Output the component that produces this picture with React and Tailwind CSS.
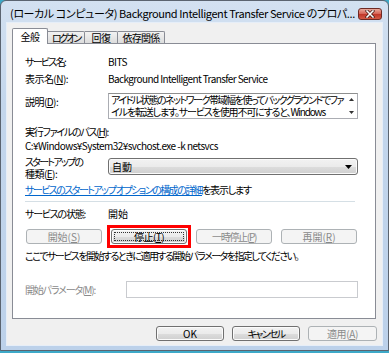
import React from "react";

const U = ({ children }) => (
  <span className="underline underline-offset-[1px] decoration-[1px]">{children}</span>
);

function Btn({ children, disabled, className = "" }) {
  const base =
    "h-[15px] flex items-center justify-center rounded-[3px] border leading-none whitespace-nowrap";
  const look = disabled
    ? "border-[#adb2b5] bg-[#f4f4f4] text-[#8a8a8a]"
    : "border-[#707070] bg-[linear-gradient(#f2f2f2_0%,#ebebeb_50%,#dddddd_51%,#cfcfcf_100%)] shadow-[inset_0_0_0_1px_#fbfbfb] text-black";
  return <div className={`${base} ${look} ${className}`}>{children}</div>;
}

function Row({ label, labelClass = "", children, className = "" }) {
  return (
    <div className={`flex items-center h-[13px] ${className}`}>
      <div className={`w-[83px] shrink-0 whitespace-nowrap ${labelClass}`}>{label}</div>
      <div className="flex-1 whitespace-nowrap">{children}</div>
    </div>
  );
}

const tabOff =
  "h-[12px] border border-b-0 border-l-0 border-[#898c95] bg-[linear-gradient(#f2f2f2,#dcdcdc)] flex items-center justify-center rounded-tr-[2px] whitespace-nowrap";

export default function App() {
  return (
    <div className="w-[389px] h-[353px] bg-[#3da9c8] text-[10px] leading-[13px] text-black font-['Noto_Sans_CJK_JP',sans-serif] [font-feature-settings:'palt'] overflow-hidden">
      <div className="h-[351px] flex flex-col rounded-t-[6px] border border-[#5b6470] bg-[linear-gradient(180deg,#d3e1f1_0%,#c3d6ec_30%,#bcd1ea_100%)]">
        {/* Title bar */}
        <div className="h-[22px] shrink-0 flex items-start pl-[9px] pr-[6px]">
          <div className="mt-[5px] text-[11px] leading-[14px] whitespace-nowrap tracking-[-0.4px]">
            (ローカル コンピュータ) Background Intelligent Transfer Service のプロパ...
          </div>
          <div className="ml-auto shrink-0 mt-[7px] w-[24px] h-[12px] rounded-[3px] border border-[#6e2a24] bg-[linear-gradient(#e9a99c_0%,#d7685a_45%,#c0382a_55%,#d45a45_100%)] flex items-center justify-center">
            <svg width="10" height="8" viewBox="0 0 10 8">
              <path d="M2 1 L8 7 M8 1 L2 7" stroke="#3b1510" strokeWidth="3" strokeLinecap="square" />
              <path d="M2 1 L8 7 M8 1 L2 7" stroke="#ffffff" strokeWidth="1.6" strokeLinecap="square" />
            </svg>
          </div>
        </div>

        {/* Client area */}
        <div className="flex-1 mx-[6px] mb-[5px] bg-[#f0f0f0] shadow-[0_0_0_1px_#e6eef8] flex flex-col">
          {/* Tabs */}
          <div className="flex items-end h-[20px] pl-[5px] pt-[5px]">
            <div className="relative z-10 h-[16px] -mb-px w-[36px] border border-b-0 border-[#898c95] bg-white flex items-center justify-center rounded-t-[2px] whitespace-nowrap tracking-[-0.5px]">
              全般
            </div>
            <div className={`${tabOff} w-[37px] tracking-[-2.2px]`}>ログオン</div>
            <div className={`${tabOff} w-[33px] tracking-[-0.5px]`}>回復</div>
            <div className={`${tabOff} w-[47px] tracking-[-0.75px]`}>依存関係</div>
          </div>

          {/* Panel */}
          <div className="ml-[5px] w-[364px] h-[276px] border border-[#898c95] bg-white pl-[12px] flex flex-col">
            <Row label="サービス名:" labelClass="tracking-[-1.7px]" className="mt-[11px]">
              <span className="tracking-[-0.5px]">BITS</span>
            </Row>
            <Row
              label={
                <>
                  表示名(<U>N</U>):
                </>
              }
              labelClass="tracking-[-0.55px]"
              className="mt-[4px]"
            >
              <span className="tracking-[-0.6px]">Background Intelligent Transfer Service</span>
            </Row>

            <div className="flex mt-[8px] h-[26px]">
              <div className="w-[83px] shrink-0 mt-[2px] tracking-[-0.55px]">
                説明(<U>D</U>):
              </div>
              <div className="w-[250px] h-[26px] border border-[#abadb3] border-t-[#8e8f8f] flex">
                <div className="flex-1 pl-[2px] leading-[12px] whitespace-nowrap">
                  <div className="tracking-[-1.5px]">
                    アイドル状態のネットワーク帯域幅を使ってバックグラウンドでファ
                  </div>
                  <div className="tracking-[-1.15px]">
                    イルを転送します。サービスを使用不可にすると、Windows
                  </div>
                </div>
                <div className="w-[11px] shrink-0 flex flex-col items-center justify-between py-[4px]">
                  <svg width="5" height="3" viewBox="0 0 5 3">
                    <path d="M0 3 L2.5 0 L5 3 Z" fill="#333" />
                  </svg>
                  <svg width="5" height="3" viewBox="0 0 5 3">
                    <path d="M0 0 L2.5 3 L5 0 Z" fill="#333" />
                  </svg>
                </div>
              </div>
            </div>

            <div className="mt-[6px] h-[13px] flex items-center whitespace-nowrap tracking-[-1.27px]">
              実行ファイルのパス(<U>H</U>):
            </div>
            <div className="mt-[1px] h-[13px] flex items-center whitespace-nowrap tracking-[-0.54px]">
              C:¥Windows¥System32¥svchost.exe -k netsvcs
            </div>

            <div className="flex mt-[4px] h-[24px]">
              <div className="w-[83px] shrink-0 leading-[12px] whitespace-nowrap">
                <div className="tracking-[-1.75px]">スタートアップの</div>
                <div className="tracking-[-0.55px]">
                  種類(<U>E</U>):
                </div>
              </div>
              <div className="mt-[2px] w-[250px] h-[17px] rounded-[3px] border border-[#707070] bg-[linear-gradient(#f2f2f2_0%,#ebebeb_50%,#dddddd_51%,#cfcfcf_100%)] shadow-[inset_0_0_0_1px_#fbfbfb] flex items-center pl-[3px] pr-[5px]">
                <span>自動</span>
                <svg className="ml-auto" width="7" height="4" viewBox="0 0 7 4">
                  <path d="M0 0 L7 0 L3.5 4 Z" fill="#000" />
                </svg>
              </div>
            </div>

            <div className="mt-[3px] h-[13px] flex items-center whitespace-nowrap">
              <span className="text-[#0066cc] underline underline-offset-[1px] tracking-[-1.55px]">
                サービスのスタートアップ オプションの構成の詳細
              </span>
              <span className="tracking-[-1.16px]">を表示します</span>
            </div>

            <div className="mt-[5px] w-[330px] h-px bg-[#d5dfe5]" />

            <Row label="サービスの状態:" labelClass="tracking-[-1.23px]" className="mt-[5px]">
              開始
            </Row>

            <div className="mt-[9px] ml-px flex gap-[9px]">
              <Btn disabled className="w-[76px]">
                開始(<U>S</U>)
              </Btn>
              <div className="relative">
                <div className="absolute -inset-[4px] border-[3px] border-[#ff0000]" />
                <Btn className="w-[76px] relative tracking-[-0.55px]">
                  <div className="absolute inset-[2px] border border-dotted border-[#333]" />
                  <span className="relative">
                    停止(<U>T</U>)
                  </span>
                </Btn>
              </div>
              <Btn disabled className="w-[76px] tracking-[-1.3px]">
                一時停止(<U>P</U>)
              </Btn>
              <Btn disabled className="w-[76px]">
                再開(<U>R</U>)
              </Btn>
            </div>

            <div className="mt-[5px] h-[13px] flex items-center whitespace-nowrap tracking-[-1.53px]">
              ここでサービスを開始するときに適用する開始パラメータを指定してください。
            </div>

            <div className="mt-[19px] flex items-center h-[17px]">
              <div className="w-[101px] shrink-0 text-[#8a8a8a] whitespace-nowrap tracking-[-1.16px]">
                開始パラメータ(<U>M</U>):
              </div>
              <div className="w-[232px] h-[17px] border border-[#c9cbcf] bg-white" />
            </div>
          </div>

          {/* Bottom buttons */}
          <div className="mt-[7px] flex justify-end gap-[8px] pr-[5px]">
            <Btn className="w-[68px]">OK</Btn>
            <Btn className="w-[68px] tracking-[-1.66px]">キャンセル</Btn>
            <Btn disabled className="w-[69px] tracking-[-0.37px]">
              適用(<U>A</U>)
            </Btn>
          </div>
        </div>
      </div>
    </div>
  );
}
